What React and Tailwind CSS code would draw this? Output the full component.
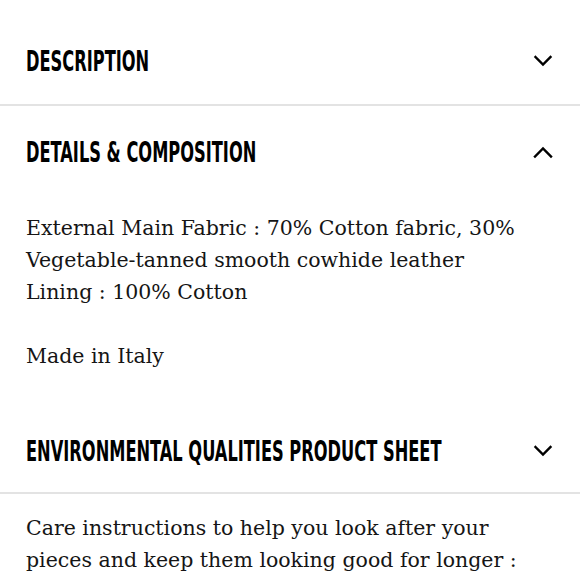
function Chevron({ up }) {
  return (
    <svg width="20" height="20" viewBox="0 0 20 20" fill="none" stroke="#000" strokeWidth="2.4" strokeLinecap="square" className="shrink-0">
      {up ? <path d="M2 14.5 L10 6.5 L18 14.5" /> : <path d="M2.5 6 L10 13.5 L17.5 6" />}
    </svg>
  )
}

function Header({ title, up, h }) {
  return (
    <div className={`flex items-center pl-[26px] pr-[27px] ${h}`}>
      <div className="flex-1 min-w-0 pt-[2px]">
        <h3 className="font-['DejaVu_Sans_Condensed','DejaVu_Sans',sans-serif] font-bold text-[28px] leading-none text-black whitespace-nowrap inline-block origin-left scale-x-[0.645]">
          {title}
        </h3>
      </div>
      <Chevron up={up} />
    </div>
  )
}

export default function App() {
  return (
    <div className="w-[580px] h-[580px] overflow-hidden bg-white">
      <div className="pt-[18px]">
        <Header title="DESCRIPTION" h="h-[86px]" />
      </div>
      <div className="h-[2px] bg-[#e3e3e3]" />
      <Header title="DETAILS & COMPOSITION" up h="h-[92px]" />
      <div className="px-[26px] pt-[14px] pb-[38px] font-['DejaVu_Serif',serif] text-[20.5px] leading-[32px] text-[#151515]">
        <p>External Main Fabric : 70% Cotton fabric, 30%</p>
        <p>Vegetable-tanned smooth cowhide leather</p>
        <p>Lining : 100% Cotton</p>
        <p className="mt-[32px]">Made in Italy</p>
      </div>
      <Header title="ENVIRONMENTAL QUALITIES PRODUCT SHEET" h="h-[82px]" />
      <div className="h-[2px] bg-[#e3e3e3]" />
      <div className="px-[26px] pt-[18px] font-['DejaVu_Serif',serif] text-[20.5px] leading-[32px] text-[#151515]">
        <p>Care instructions to help you look after your</p>
        <p>pieces and keep them looking good for longer :</p>
      </div>
    </div>
  )
}
